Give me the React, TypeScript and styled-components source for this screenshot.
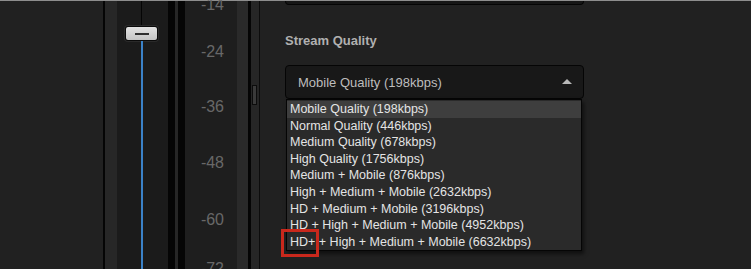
import React from "react";
import styled, { createGlobalStyle } from "styled-components";

const Global = createGlobalStyle`
  html, body { margin: 0; padding: 0; background: #212121; }
  body { font-family: "Liberation Sans", Arial, sans-serif; overflow: hidden; }
`;

const Frame = styled.div`
  width: 751px;
  height: 269px;
  display: flex;
  flex-direction: column;
  background: #212121;
  overflow: hidden;
`;

const TopRule = styled.div`
  height: 1px;
  background: #8e8e8e;
  flex: none;
`;

const Columns = styled.div`
  flex: 1;
  display: flex;
  min-height: 0;
`;

const Strip = styled.div<{ $w: number; $bg: string }>`
  flex: none;
  width: ${(p) => p.$w}px;
  background: ${(p) => p.$bg};
  position: relative;
`;

const FaderTrack = styled.div`
  flex: none;
  width: 51px;
  background: #1b1b1b;
  display: flex;
  flex-direction: column;
  align-items: center;
`;

const WireAbove = styled.div`
  width: 1px;
  height: 25px;
  background: #050505;
  margin-right: 2px;
`;

const Handle = styled.div`
  width: 31px;
  height: 13px;
  border: 1px solid #0a0a0a;
  border-radius: 3px;
  background: linear-gradient(#e2e2e2, #c4c4c4);
  box-shadow: 0 0 0 1px #2a2a2a;
  display: flex;
  align-items: center;
  justify-content: center;
  margin-right: 2px;
`;

const HandleDash = styled.div`
  width: 14px;
  height: 2px;
  background: #2e2e2e;
`;

const Level = styled.div`
  width: 2px;
  flex: 1;
  background: #3b82c8;
  margin-right: 1px;
`;

const Scale = styled.div`
  flex: none;
  width: 52px;
  background: #1e1e1e;
  display: flex;
  flex-direction: column;
  align-items: flex-end;
  padding-right: 13px;
  box-sizing: border-box;
`;

const TickList = styled.div`
  margin-top: -6px;
  display: flex;
  flex-direction: column;
  align-items: flex-end;
`;

const Tick = styled.div<{ $gap: number }>`
  height: ${(p) => p.$gap}px;
  line-height: 20px;
  font-size: 16px;
  color: #686868;
  flex: none;
`;

const ScrollGrip = styled.div`
  position: absolute;
  left: 1px;
  top: 84px;
  width: 3px;
  height: 18px;
  border: 1px solid #0c0c0c;
  background: #3a3a3a;
`;

const Panel = styled.div`
  flex: 1;
  background: #212121;
  padding: 0 0 0 25px;
  display: flex;
  flex-direction: column;
`;

const PrevBox = styled.div`
  width: 297px;
  height: 3px;
  background: #161616;
  border: 1px solid #050505;
  border-top: none;
  border-radius: 0 0 5px 5px;
`;

const Label = styled.div`
  margin-top: 28px;
  font-size: 13px;
  font-weight: bold;
  color: #b0b0b0;
  line-height: 16px;
`;

const SelectWrap = styled.div`
  position: relative;
  margin-top: 16px;
  width: 299px;
`;

const SelectBox = styled.div`
  height: 32px;
  background: #181818;
  border: 1px solid #050505;
  border-radius: 4px;
  display: flex;
  align-items: center;
  justify-content: space-between;
  padding: 0 11px 0 12px;
  font-size: 13px;
  color: #bdbdbd;
`;

const Caret = styled.div`
  width: 0;
  height: 0;
  border-left: 5px solid transparent;
  border-right: 5px solid transparent;
  border-bottom: 5px solid #b8b8b8;
  margin-top: -2px;
`;

const List = styled.ul`
  position: absolute;
  left: 1px;
  top: 34px;
  width: 296px;
  margin: 0;
  padding: 1px 0 0 0;
  list-style: none;
  background: #2a2a2a;
  border: 1px solid #050505;
  box-shadow: 2px 3px 4px rgba(0, 0, 0, 0.55);
  box-sizing: border-box;
`;

const Item = styled.li<{ $active?: boolean }>`
  height: 16.6px;
  line-height: 16.6px;
  padding-left: 3px;
  font-size: 12.5px;
  color: #e4e4e4;
  background: ${(p) => (p.$active ? "#3e3e3e" : "transparent")};
  white-space: nowrap;
  position: relative;
`;

const Callout = styled.div`
  position: absolute;
  left: -6px;
  top: -5px;
  width: 32px;
  height: 22px;
  border: 3px solid #c9281c;
`;

const options = [
  "Mobile Quality (198kbps)",
  "Normal Quality (446kbps)",
  "Medium Quality (678kbps)",
  "High Quality (1756kbps)",
  "Medium + Mobile (876kbps)",
  "High + Medium + Mobile (2632kbps)",
  "HD + Medium + Mobile (3196kbps)",
  "HD + High + Medium + Mobile (4952kbps)",
  "HD+ + High + Medium + Mobile (6632kbps)",
];

const ticks: [string, number][] = [
  ["-14", 47],
  ["-24", 55],
  ["-36", 56],
  ["-48", 57],
  ["-60", 49],
  ["-72", 20],
];

export default function App() {
  return (
    <>
      <Global />
      <Frame>
        <TopRule />
        <Columns>
          <Strip $w={103} $bg="#212121" />
          <Strip $w={2} $bg="#050505" />
          <Strip $w={12} $bg="#272727" />
          <FaderTrack>
            <WireAbove />
            <Handle>
              <HandleDash />
            </Handle>
            <Level />
          </FaderTrack>
          <Strip $w={7} $bg="#050505" />
          <Strip $w={3} $bg="#262626" />
          <Strip $w={7} $bg="#050505" />
          <Scale>
            <TickList>
              {ticks.map(([t, g]) => (
                <Tick key={t} $gap={g}>
                  {t}
                </Tick>
              ))}
            </TickList>
          </Scale>
          <Strip $w={11} $bg="#2a2a2a" />
          <Strip $w={3} $bg="#050505" />
          <Strip $w={8} $bg="#262626">
            <ScrollGrip />
          </Strip>
          <Strip $w={1} $bg="#0c0c0c" />
          <Panel>
            <PrevBox />
            <Label>Stream Quality</Label>
            <SelectWrap>
              <SelectBox>
                <span>Mobile Quality (198kbps)</span>
                <Caret />
              </SelectBox>
              <List>
                {options.map((o, i) => (
                  <Item key={o} $active={i === 0}>
                    {o}
                    {i === options.length - 1 && <Callout />}
                  </Item>
                ))}
              </List>
            </SelectWrap>
          </Panel>
        </Columns>
      </Frame>
    </>
  );
}
